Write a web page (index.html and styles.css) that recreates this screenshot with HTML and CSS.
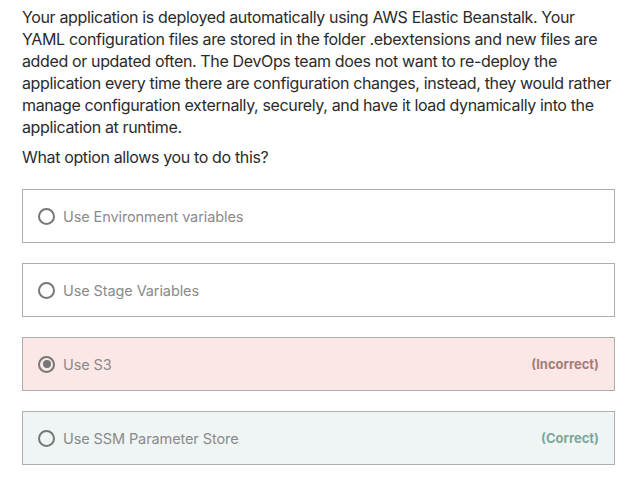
FILE: index.html
```html
<!DOCTYPE html>
<html>
<head>
<meta charset="utf-8">
<link rel="stylesheet" href="styles.css">
</head>
<body>
<div class="question">
  <p class="prompt">Your application is deployed automatically using AWS Elastic Beanstalk. Your YAML configuration files are stored in the folder .ebextensions and new files are added or updated often. The DevOps team does not want to re-deploy the application every time there are configuration changes, instead, they would rather manage configuration externally, securely, and have it load dynamically into the application at runtime.</p>
  <p class="ask">What option allows you to do this?</p>
  <div class="options">
    <div class="option">
      <span class="radio"></span>
      <span class="label">Use Environment variables</span>
    </div>
    <div class="option">
      <span class="radio"></span>
      <span class="label">Use Stage Variables</span>
    </div>
    <div class="option incorrect">
      <span class="radio checked"></span>
      <span class="label">Use S3</span>
      <span class="status">(Incorrect)</span>
    </div>
    <div class="option correct">
      <span class="radio"></span>
      <span class="label">Use SSM Parameter Store</span>
      <span class="status">(Correct)</span>
    </div>
  </div>
</div>
</body>
</html>
```

FILE: styles.css
```css
html, body {
  margin: 0;
  padding: 0;
  background: #ffffff;
}
body {
  font-family: Inter, "Noto Sans", "Liberation Sans", sans-serif;
  color: #2b2b2b;
}
.question {
  padding: 6px 18px 0 22px;
}
.prompt {
  margin: 0;
  font-size: 16px;
  line-height: 22px;
  letter-spacing: -0.36px;
}
.ask {
  margin: 8px 0 0;
  font-size: 16px;
  line-height: 22px;
  letter-spacing: -0.36px;
}
.options {
  margin-top: 21px;
  display: flex;
  flex-direction: column;
  gap: 20px;
}
.option {
  display: flex;
  align-items: center;
  height: 52px;
  border: 1px solid #adadad;
  padding: 0 15px 0 15px;
  background: #fff;
}
.option.incorrect {
  background: #fbe8e6;
}
.option.correct {
  background: #eff5f4;
}
.radio {
  box-sizing: border-box;
  width: 17px;
  height: 17px;
  border: 2px solid #777;
  border-radius: 50%;
  margin-right: 8px;
  flex: none;
  position: relative;
}
.radio.checked::after {
  content: "";
  position: absolute;
  left: 2.5px;
  top: 2.5px;
  width: 8px;
  height: 8px;
  border-radius: 50%;
  background: #777;
}
.label {
  font-size: 14.5px;
  color: #8a8a8a;
  flex: 1;
  letter-spacing: -0.1px;
}
.status {
  font-size: 13px;
  font-weight: 700;
}
.incorrect .status {
  color: #a87b76;
}
.correct .status {
  color: #7fa797;
}
```
